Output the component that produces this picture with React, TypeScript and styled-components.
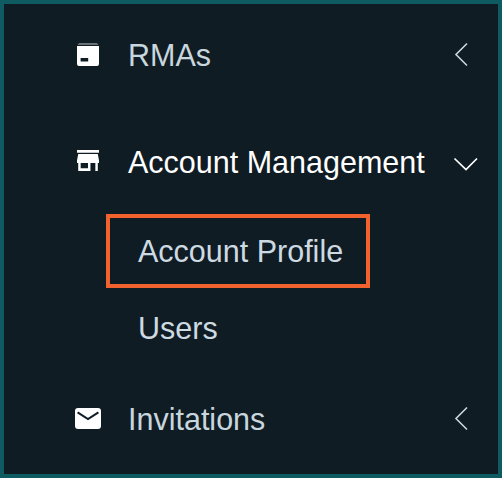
import React from "react";
import styled, { createGlobalStyle } from "styled-components";

const GlobalStyle = createGlobalStyle`
  html, body { margin: 0; padding: 0; background: #101c24; }
  * { box-sizing: border-box; }
`;

const Frame = styled.nav`
  width: 502px;
  height: 478px;
  border: 4px solid #0f5b62;
  background: #101c24;
  padding-top: 21px;
  font-family: "Liberation Sans", Arial, sans-serif;
  overflow: hidden;
`;

const Row = styled.div<{ $open?: boolean; $gap: number }>`
  display: flex;
  align-items: center;
  height: 60px;
  margin-bottom: ${(p) => p.$gap}px;
  padding: 0 18px 0 71px;
  color: ${(p) => (p.$open ? "#ffffff" : "#c8d6de")};
  font-size: 30.5px;
`;

const IconSlot = styled.span`
  display: flex;
  width: 53px;
  flex: none;
`;

const Label = styled.span`
  flex: 1;
  white-space: nowrap;
`;

const SubList = styled.div`
  display: flex;
  flex-direction: column;
  align-items: flex-start;
  gap: 10px;
  margin: 0 0 31px 102px;
`;

const SubItem = styled.div<{ $active?: boolean }>`
  display: flex;
  align-items: center;
  width: 264px;
  height: ${(p) => (p.$active ? 74 : 60)}px;
  border: ${(p) => (p.$active ? "4px solid #f2622e" : "none")};
  padding-left: ${(p) => (p.$active ? 28 : 32)}px;
  color: #cddae2;
  font-size: 30.5px;
  white-space: nowrap;
`;

const Icon = styled.svg`
  display: block;
  width: 28px;
  height: 28px;
  flex: none;
`;

const BoxIcon = () => (
  <Icon viewBox="0 0 28 28">
    <path d="M4.5 2.6h17a2.6 2.6 0 0 1 1.8 1H2.7a2.6 2.6 0 0 1 1.8-1z" fill="#ffffff" opacity="0.75" />
    <path
      fill="#ffffff"
      fillRule="evenodd"
      d="M2 5h22v18a2 2 0 0 1-2 2H4a2 2 0 0 1-2-2zm3.6 12v3.4h7.6V17z"
    />
  </Icon>
);

const StoreIcon = () => (
  <Icon viewBox="1.36 2.4 22.9 21.5" preserveAspectRatio="none">
    <path
      fill="#ffffff"
      d="M21 4H3v2h18V4zm0 10v-2l-1-5H4l-1 5v2h1v6h10v-6h4v6h2v-6h1zm-9 4H6v-4h6v4z"
    />
  </Icon>
);

const MailIcon = () => (
  <Icon viewBox="0 0 28 28">
    <rect x="0" y="3" width="26" height="21" rx="3" fill="#ffffff" />
    <path d="M2.6 7.4 13 14l10.4-6.6" fill="none" stroke="#101c24" strokeWidth="2" />
  </Icon>
);

const Chevron = ({ open }: { open?: boolean }) => (
  <Icon viewBox="0 0 28 28">
    {open ? (
      <path d="M2.5 10.5 14 21.5l11-11" fill="none" stroke="#ffffff" strokeWidth="1.7" />
    ) : (
      <path d="M15 2.5 4 13.5l11 11" fill="none" stroke="#c9d8e0" strokeWidth="1.6" />
    )}
  </Icon>
);

export default function App() {
  return (
    <>
      <GlobalStyle />
      <Frame>
        <Row $gap={47}>
          <IconSlot>
            <BoxIcon />
          </IconSlot>
          <Label>RMAs</Label>
          <Chevron />
        </Row>
        <Row $open $gap={22}>
          <IconSlot>
            <StoreIcon />
          </IconSlot>
          <Label>Account Management</Label>
          <Chevron open />
        </Row>
        <SubList>
          <SubItem $active>Account Profile</SubItem>
          <SubItem>Users</SubItem>
        </SubList>
        <Row $gap={0}>
          <IconSlot>
            <MailIcon />
          </IconSlot>
          <Label>Invitations</Label>
          <Chevron />
        </Row>
      </Frame>
    </>
  );
}
